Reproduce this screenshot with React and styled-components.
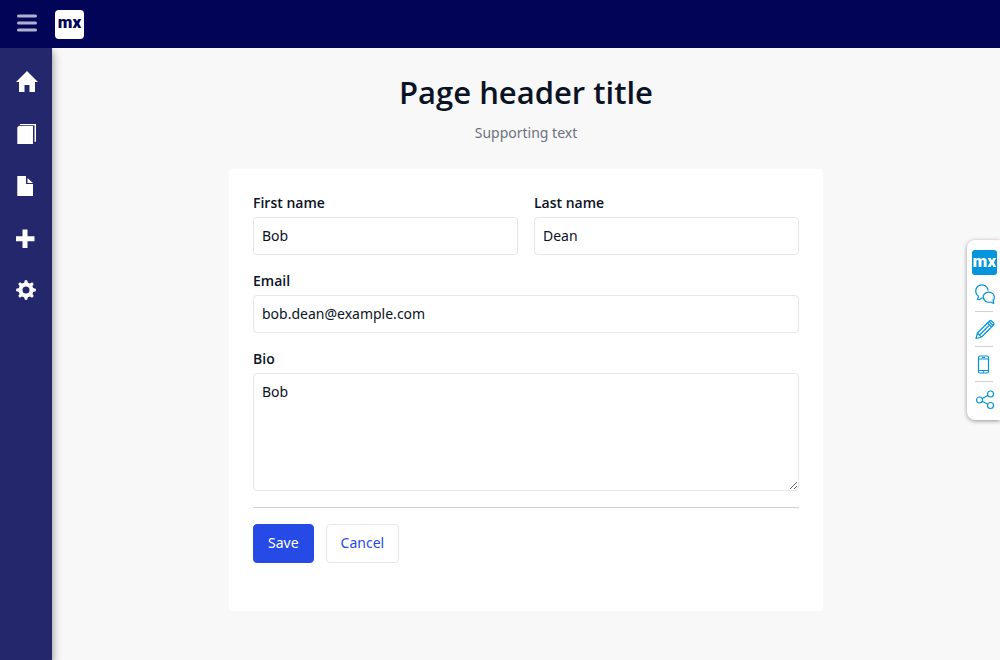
import React from "react";
import styled, { createGlobalStyle } from "styled-components";

const GlobalStyle = createGlobalStyle`
  *, *::before, *::after { box-sizing: border-box; }
  body {
    margin: 0;
    background: #f8f8f8;
    color: #0a1325;
    font-family: "Noto Sans", "Open Sans", sans-serif;
    font-size: 14px;
    line-height: 20px;
  }
  button, input, textarea { font: inherit; color: inherit; }
`;

const Shell = styled.div`
  display: flex;
  flex-direction: column;
  min-height: 100vh;
`;

const TopBar = styled.header`
  position: relative;
  z-index: 2;
  display: flex;
  align-items: center;
  gap: 16px;
  height: 48px;
  padding: 0 15px;
  background: #020557;
`;

const IconButton = styled.button`
  display: flex;
  padding: 0;
  border: 0;
  background: none;
  color: #b0b1cf;
  cursor: pointer;
`;

const Logo = styled.span`
  display: flex;
  align-items: center;
  justify-content: center;
  flex: none;
  width: ${(p) => p.$size}px;
  height: ${(p) => p.$size}px;
  padding-bottom: 4px;
  border-radius: ${(p) => p.$radius}px;
  background: ${(p) => p.$bg};
  color: ${(p) => p.$fg};
  font-family: Roboto, sans-serif;
  font-size: 17px;
  font-weight: 900;
`;

const Body = styled.div`
  display: flex;
  flex: 1;
`;

const Sidebar = styled.nav`
  flex: none;
  width: 52px;
  padding-top: 8px;
  background: #24276c;
  box-shadow: 0 0 4px rgb(0 0 0 / 14%), 2px 4px 8px rgb(0 0 0 / 28%);
`;

const NavLink = styled.a`
  display: flex;
  align-items: center;
  height: 52px;
  padding-left: 14px;
  color: #fff;
`;

const Content = styled.main`
  display: flex;
  flex: 1;
  flex-direction: column;
  align-items: center;
  padding: 24px;
`;

const Title = styled.h1`
  margin: 0;
  font-family: "Open Sans", "Noto Sans", sans-serif;
  font-size: 31px;
  font-weight: 600;
  line-height: 40px;
`;

const Subtitle = styled.p`
  margin: 11px 0 26px;
  color: #6c717e;
`;

const Card = styled.form`
  display: flex;
  flex-direction: column;
  gap: 16px;
  width: 66%;
  padding: 24px 24px 48px;
  border-radius: 4px;
  background: #fff;
`;

const FieldRow = styled.div`
  display: grid;
  grid-template-columns: 1fr 1fr;
  gap: 16px;
`;

const Field = styled.div`
  display: flex;
  flex-direction: column;
  gap: 4px;
`;

const Label = styled.label`
  font-family: "Open Sans", "Noto Sans", sans-serif;
  font-weight: 600;
`;

const Input = styled.input`
  width: 100%;
  height: 38px;
  padding: 7px 8px 9px;
  border: 1px solid #e7e7e9;
  border-radius: 4px;
  background: #fff;
`;

const TextArea = styled.textarea`
  display: block;
  width: 100%;
  padding: 8px;
  border: 1px solid #e7e7e9;
  border-radius: 4px;
  background: #fff;
  resize: vertical;
`;

const Divider = styled.hr`
  width: 100%;
  margin: 0;
  border: 0;
  border-top: 1px solid #ced0d3;
`;

const Actions = styled.div`
  display: flex;
  gap: 12px;
`;

const Button = styled.button`
  height: 39px;
  padding: 0 14px 2px;
  border: 1px solid ${(p) => (p.$primary ? "#264ae5" : "#e7e7e9")};
  border-radius: 4px;
  background: ${(p) => (p.$primary ? "#264ae5" : "#fff")};
  color: ${(p) => (p.$primary ? "#fff" : "#264ae5")};
  cursor: pointer;
`;

const Dock = styled.aside`
  position: fixed;
  top: 240px;
  right: 0;
  display: flex;
  flex-direction: column;
  align-items: flex-start;
  width: 33px;
  padding: 10px 0 3px 5px;
  border-radius: 8px 0 0 8px;
  background: #fff;
  box-shadow: 0 1px 4px rgb(0 0 0 / 40%);
`;

const DockList = styled.ul`
  margin: 2px 0 0 3px;
  padding: 0;
  list-style: none;
`;

const DockItem = styled.li`
  width: 18px;
  height: 35px;
  border-bottom: 1px solid #ced0d3;
  &:last-child { border-bottom: 0; }
`;

const DockButton = styled.button`
  display: flex;
  align-items: center;
  height: 34px;
  padding: 2px 0 0;
  border: 0;
  background: none;
  color: #0595db;
  cursor: pointer;
`;

const NAV = [
  { name: "Home", icon: <path d="M13 1 24 12H21V22H15.500V15H10.500V22H5V12H2Z" /> },
  {
    name: "Pages",
    icon: (
      <>
        <path d="M3.300 5.500 4.500 4H19V22H3.300Z" />
        <path d="M5.500 3 6.500 2H22V19.500L20.500 20V3.300H5.500Z" />
      </>
    ),
  },
  { name: "Document", icon: <path d="M3.300 2H12V10H19V22H3.300ZM13.500 4 19 9H13.500Z" /> },
  { name: "Add", icon: <path d="M8.500 3.500H13.500V10.200H20.500V15.300H13.500V22H8.500V15.300H2V10.200H8.500Z" /> },
  {
    name: "Settings",
    icon: (
      <>
        <circle cx="12" cy="12" r="5.500" fill="none" stroke="currentColor" strokeWidth="4" />
        {[0, 45, 90, 135, 180, 225, 270, 315].map((a) => (
          <path key={a} d="M10 5.500 10.800 2.200H13.200L14 5.500Z" transform={`rotate(${a} 12 12)`} />
        ))}
      </>
    ),
  },
];

const TOOLS = [
  {
    name: "Feedback",
    icon: (
      <>
        <path d="M7.500 13.500 5 15.300 2.500 15.500 3.600 12.300A6.200 6.200 0 1 1 13.100 6.500" />
        <path d="M8.200 12A5.700 5 0 1 1 18 16.500L18.700 19.500 15.500 18A5.700 5.500 0 0 1 8.200 12Z" />
      </>
    ),
  },
  {
    name: "Edit",
    icon: <path d="M1 19.500 2.500 14 14.500 2Q15.500 1 16.500 2L18.500 4Q19.500 5 18.500 6L6.500 18ZM12.500 4 16.500 8M14 2.500 18 6.500M2.500 14 6.500 18M4.500 16 14.500 6" />,
  },
  {
    name: "Phone",
    icon: <path d="M5 2H12Q13.500 2 13.500 3.500V17.500Q13.500 19 12 19H5Q3.500 19 3.500 17.500V3.500Q3.500 2 5 2ZM3.500 5H13.500M3.500 16.500H13.500M7 3.500H10M8 17.800H9" />,
  },
  {
    name: "Share",
    icon: (
      <>
        <circle cx="4.500" cy="11" r="3" />
        <circle cx="15.500" cy="5" r="3" />
        <circle cx="15.500" cy="16.500" r="3" />
        <path d="M7.200 9.600 12.800 6.400M7.200 12.300 12.800 15.200" />
      </>
    ),
  },
];

export default function App() {
  return (
    <Shell>
      <GlobalStyle />
      <TopBar>
        <IconButton type="button" aria-label="Toggle menu">
          <svg width="24" height="24" viewBox="0 0 24 24" fill="currentColor">
            <rect x="2" y="2.400" width="20" height="3" rx="1.500" />
            <rect x="2" y="9.400" width="20" height="3" rx="1.500" />
            <rect x="2" y="16.400" width="20" height="3" rx="1.500" />
          </svg>
        </IconButton>
        <Logo $size={29} $radius={4} $bg="#fff" $fg="#020557">mx</Logo>
      </TopBar>
      <Body>
        <Sidebar aria-label="Main">
          {NAV.map((item) => (
            <NavLink key={item.name} href="#" aria-label={item.name}>
              <svg width="24" height="24" viewBox="0 0 24 24" fill="currentColor">
                {item.icon}
              </svg>
            </NavLink>
          ))}
        </Sidebar>
        <Content>
          <Title>Page header title</Title>
          <Subtitle>Supporting text</Subtitle>
          <Card onSubmit={(e) => e.preventDefault()}>
            <FieldRow>
              <Field>
                <Label htmlFor="first">First name</Label>
                <Input id="first" defaultValue="Bob" />
              </Field>
              <Field>
                <Label htmlFor="last">Last name</Label>
                <Input id="last" defaultValue="Dean" />
              </Field>
            </FieldRow>
            <Field>
              <Label htmlFor="email">Email</Label>
              <Input id="email" type="email" defaultValue="bob.dean@example.com" />
            </Field>
            <Field>
              <Label htmlFor="bio">Bio</Label>
              <TextArea id="bio" rows={5} defaultValue="Bob" />
            </Field>
            <Divider />
            <Actions>
              <Button type="submit" $primary>Save</Button>
              <Button type="button">Cancel</Button>
            </Actions>
          </Card>
        </Content>
      </Body>
      <Dock aria-label="Tools">
        <Logo $size={25} $radius={3} $bg="#0595db" $fg="#fff">mx</Logo>
        <DockList>
          {TOOLS.map((tool) => (
            <DockItem key={tool.name}>
              <DockButton type="button" aria-label={tool.name}>
                <svg width="22" height="22" viewBox="0 0 22 22" fill="none" stroke="currentColor" strokeWidth="1.200" strokeLinejoin="round">
                  {tool.icon}
                </svg>
              </DockButton>
            </DockItem>
          ))}
        </DockList>
      </Dock>
    </Shell>
  );
}
